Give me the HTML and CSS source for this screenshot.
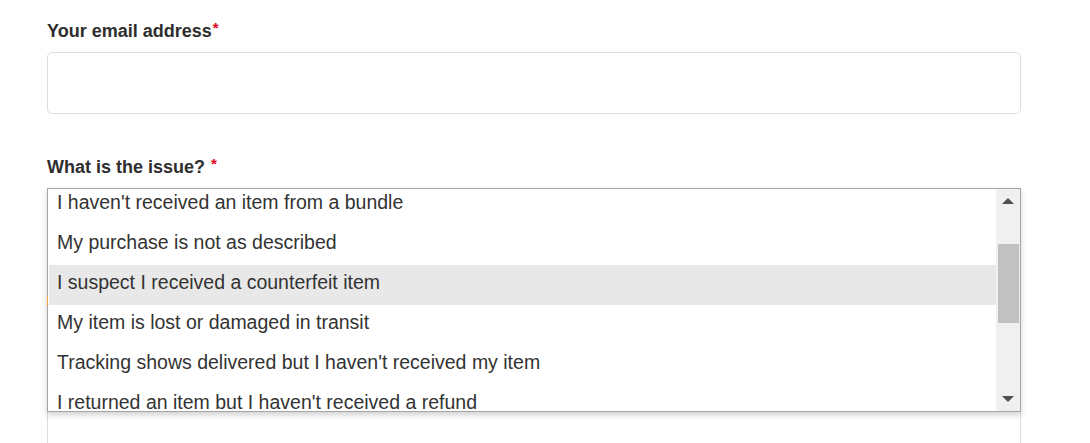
FILE: index.html
```html
<!DOCTYPE html>
<html lang="en">
<head>
<meta charset="utf-8">
<title>Contact form</title>
<link rel="stylesheet" href="styles.css">
</head>
<body>
<form class="form">
  <div class="field">
    <label class="label">Your email address<span class="req">*</span></label>
    <div class="input"></div>
  </div>
  <div class="field field-issue">
    <label class="label">What is the issue? <span class="req">*</span></label>
    <div class="select-wrap">
      <div class="select"></div>
      <div class="below"></div>
      <div class="dropdown">
        <span class="caret-mark"></span>
        <div class="options">
          <ul class="list">
            <li class="opt">I haven't received an item from a bundle</li>
            <li class="opt">My purchase is not as described</li>
            <li class="opt opt-hover">I suspect I received a counterfeit item</li>
            <li class="opt">My item is lost or damaged in transit</li>
            <li class="opt">Tracking shows delivered but I haven't received my item</li>
            <li class="opt">I returned an item but I haven't received a refund</li>
          </ul>
        </div>
        <div class="scrollbar">
          <span class="arrow arrow-up"></span>
          <div class="track"><div class="thumb"></div></div>
          <span class="arrow arrow-down"></span>
        </div>
      </div>
    </div>
  </div>
</form>
</body>
</html>
```
FILE: styles.css
```css
html, body {
  margin: 0;
  padding: 0;
  background: #ffffff;
  overflow: hidden;
}
body {
  font-family: "Liberation Sans", Arial, sans-serif;
  color: #333333;
}
.form {
  width: 974px;
  margin-left: 47px;
  padding-top: 19px;
}
.field {
  display: flex;
  flex-direction: column;
}
.label {
  font-size: 18px;
  line-height: 24px;
  font-weight: 700;
  color: #2e2e2e;
  height: 24px;
}
.req {
  color: #e0001a;
  font-size: 15px;
  vertical-align: top;
  line-height: 18px;
  margin-left: 1px;
}
.input {
  margin-top: 9px;
  height: 60px;
  border: 1px solid #dddddd;
  border-radius: 5px;
}
.field-issue {
  margin-top: 41px;
}
.select-wrap {
  position: relative;
  margin-top: 9px;
}
.select {
  height: 60px;
  border: 1px solid #dddddd;
  border-radius: 5px;
}
.below {
  margin-top: 50px;
  height: 200px;
  border: 1px solid #dddddd;
  border-radius: 5px;
}
.dropdown {
  position: absolute;
  top: 0;
  left: 0;
  width: 972px;
  height: 222px;
  border: 1px solid #a5a5a5;
  background: #ffffff;
  box-shadow: 0 3px 6px rgba(0, 0, 0, 0.18);
  display: flex;
}
.caret-mark {
  position: absolute;
  left: -1px;
  top: 107px;
  width: 1px;
  height: 10px;
  background: #f0a64a;
}
.options {
  flex: 1;
  overflow: hidden;
  padding-left: 1px;
}
.list {
  list-style: none;
  margin: -4px 0 0 0;
  padding: 0;
}
.opt {
  height: 40px;
  line-height: 35px;
  font-size: 19.5px;
  padding-left: 8px;
  color: #333333;
  white-space: nowrap;
}
.opt-hover {
  background: #e8e8e8;
}
.scrollbar {
  width: 24px;
  background: #f0f0f0;
  display: flex;
  flex-direction: column;
  align-items: center;
}
.arrow {
  width: 0;
  height: 0;
  border-left: 6px solid transparent;
  border-right: 6px solid transparent;
  margin: 9px 0;
}
.arrow-up {
  border-bottom: 6px solid #505050;
}
.arrow-down {
  border-top: 6px solid #505050;
}
.track {
  flex: 1;
  width: 100%;
  display: flex;
  flex-direction: column;
}
.thumb {
  margin-top: 31px;
  margin-left: 2px;
  width: 21px;
  height: 79px;
  background: #c1c1c1;
}
```
